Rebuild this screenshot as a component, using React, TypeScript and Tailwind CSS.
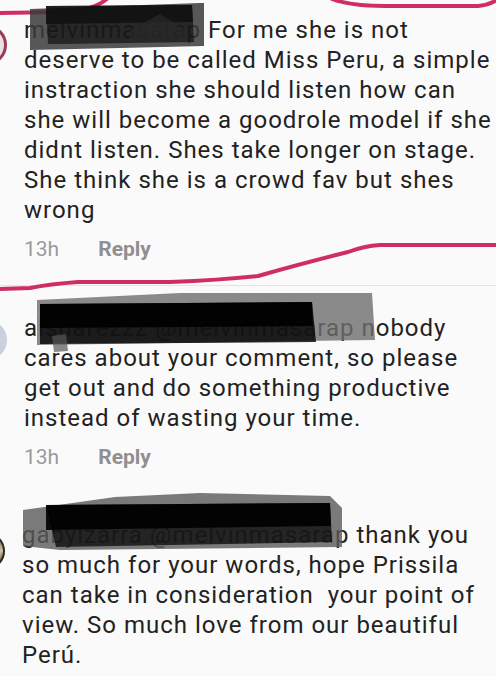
import React from "react";

type Comment = {
  user: string;
  text: string;
  avatar: string;
  meta?: boolean;
};

const comments: Comment[] = [
  {
    user: "melvinmasarap",
    text: "For me she is not deserve to be called Miss Peru, a simple instraction she should listen how can she will become a goodrole model if she didnt listen. Shes take longer on stage. She think she is a crowd fav but shes wrong",
    avatar: "ring",
    meta: true,
  },
  {
    user: "alsuarezzz",
    text: "@melvinmasarap nobody cares about your comment, so please get out and do something productive instead of wasting your time.",
    avatar: "plain",
    meta: true,
  },
  {
    user: "gabyizarra",
    text: "@melvinmasarap thank you so much for your words, hope Prissila can take in consideration\u00a0 your point of view. So much love from our beautiful Perú.",
    avatar: "photo",
  },
];

const Avatar = ({ kind }: { kind: string }) => {
  if (kind === "ring") {
    return (
      <div className="w-[40px] h-[40px] -ml-[33px] mt-[10px] shrink-0 rounded-full border-[3px] border-[#9c3a55] bg-[#e9e2e2]" />
    );
  }
  if (kind === "photo") {
    return (
      <div className="w-[38px] h-[38px] -ml-[33px] mt-[12px] shrink-0 rounded-full border-[2px] border-[#2d2a22] bg-gradient-to-b from-[#6b5a3a] via-[#cfc6a8] to-[#3a3324]" />
    );
  }
  return <div className="w-[40px] h-[40px] -ml-[33px] mt-[7px] shrink-0 rounded-full bg-[#c9d1de]" />;
};

const CommentRow = ({ c, className }: { c: Comment; className: string }) => (
  <div className={`flex gap-[17px] ${className}`}>
    <Avatar kind={c.avatar} />
    <div className="w-[468px]">
      <p className="text-[24px] leading-[30px] tracking-[1px] text-[#222]">
        <span>{c.user}</span> {c.text}
      </p>
      {c.meta && (
        <div className="flex items-center gap-[39px] mt-[11px] h-[28px] text-[21px] text-[#9a9a9a]">
          <span>13h</span>
          <span className="font-bold text-[#8f8f8f]">Reply</span>
        </div>
      )}
    </div>
  </div>
);

export default function App() {
  return (
    <div className="relative w-[496px] h-[676px] overflow-hidden bg-[#fafafa] font-['Roboto',sans-serif]">
      <CommentRow c={comments[0]} className="pt-[15px] pb-[21px] border-b border-[#e4e4e4]" />
      <CommentRow c={comments[1]} className="pt-[27px]" />
      <CommentRow c={comments[2]} className="pt-[48px]" />

      {/* pen marks and redactions drawn over the screenshot */}
      <svg className="absolute inset-0 pointer-events-none" width="496" height="676" viewBox="0 0 496 676">
        <g fill="none" stroke="#cf2d68" strokeWidth="4" strokeLinecap="round">
          <path d="M-2 13 L60 12 Q92 12 108 -2" />
          <path d="M332 -1 Q350 6 385 6 L478 6 Q490 5 498 -1" />
          <path d="M-2 289 L30 288 Q50 284 78 282 L170 282 Q220 280 258 276 Q300 264 348 252 Q364 246 380 245 L498 245" />
        </g>

        {/* comment 1 */}
        <polygon points="30,9 200,3 204,3 204,46 120,48 30,50" fill="#3a3a3a" opacity="0.85" />
        <polygon points="46,6 192,5 194,42 62,44 48,44" fill="#000" opacity="0.55" />
        <polygon points="46,6 192,5 193,22 46,24" fill="#111" opacity="0.85" />
        <polygon points="130,30 160,14 186,30 186,38 130,38" fill="#2a2a2a" opacity="0.7" />

        {/* comment 2 */}
        <polygon points="37,300 180,293 372,293 375,340 300,341 37,345" fill="#6e6e6e" opacity="0.8" />
        <polygon points="40,304 312,302 316,342 40,344" fill="#000" opacity="0.8" />
        <polygon points="40,304 312,302 313,326 40,328" fill="#000" opacity="0.9" />
        <polygon points="52,336 66,334 68,351 54,352" fill="#555" opacity="0.7" />

        {/* comment 3 */}
        <polygon points="23,510 115,497 200,493 330,496 342,508 342,547 60,550 23,546" fill="#5a5a5a" opacity="0.8" />
        <polygon points="46,505 330,503 332,542 56,547" fill="#000" opacity="0.7" />
        <polygon points="46,505 330,503 331,526 46,530" fill="#000" opacity="0.9" />
      </svg>
    </div>
  );
}
